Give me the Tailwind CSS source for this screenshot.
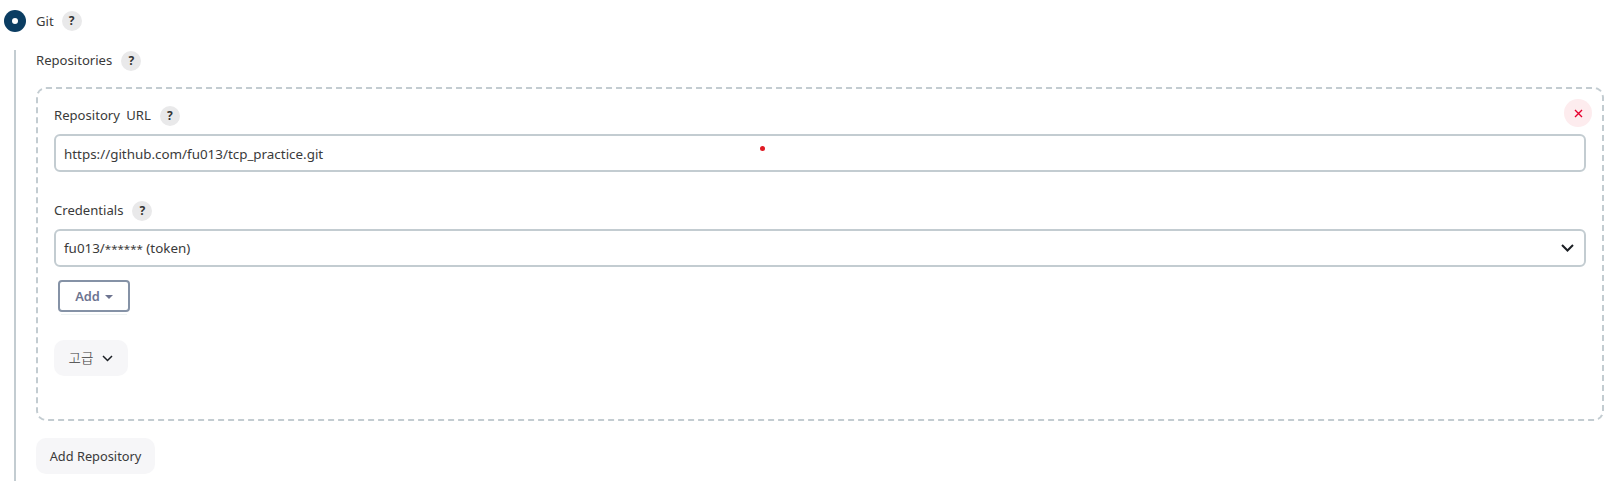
<!DOCTYPE html>
<html lang="en">
<head>
  <meta charset="UTF-8">
  <title>Git</title>
  <script src="https://cdn.jsdelivr.net/npm/@tailwindcss/browser@4"></script>
</head>
<body class="bg-white text-[#3a3a3a] text-[13.1px] font-['Noto_Sans','Noto_Sans_CJK_KR',sans-serif] overflow-hidden">
  <div class="relative h-[481px] w-[1615px] pt-[10px]">
    <!-- radio row -->
    <div class="flex items-center h-[22px] ml-[4px]">
      <span class="w-[22px] h-[22px] rounded-full bg-[#0b3d62] flex items-center justify-center">
        <span class="w-[6px] h-[6px] rounded-full bg-white"></span>
      </span>
      <span class="ml-[10px] pt-[1px]">Git</span>
      <span class="ml-[8px] w-[20px] h-[20px] rounded-full bg-[#e9e9ea] flex items-center justify-center text-[12px] font-bold text-[#333]">?</span>
    </div>

    <div class="ml-[14px] mt-[18px] border-l-2 border-[#c3ccd1] pl-[20px] h-[431px]">
      <div class="flex items-center h-[20px] pt-[1px]">
        <span>Repositories</span>
        <span class="ml-[9px] w-[20px] h-[20px] rounded-full bg-[#e9e9ea] flex items-center justify-center text-[12px] font-bold text-[#333]">?</span>
      </div>

      <!-- repeatable box -->
      <div class="relative mt-[17px] w-[1568px] h-[334px] border-2 border-dashed border-[#c3ccd1] rounded-[10px] pl-[16px] pr-[16px] pt-[17px]">
        <button class="absolute right-[10px] top-[10px] w-[28px] h-[28px] rounded-full bg-[#fdecee] flex items-center justify-center">
          <svg width="9" height="9" viewBox="0 0 9 9" fill="none" stroke="#e6002e" stroke-width="1.400"><path d="M1 1l7 7M8 1l-7 7"/></svg>
        </button>

        <div class="flex items-center h-[20px]">
          <span class="[word-spacing:3px]">Repository URL</span>
          <span class="ml-[9px] w-[20px] h-[20px] rounded-full bg-[#e9e9ea] flex items-center justify-center text-[12px] font-bold text-[#333]">?</span>
        </div>
        <div class="mt-[8px] w-[1532px] h-[38px] border-2 border-[#c3ccd1] rounded-[6px] flex items-center pl-[8px] pt-[2px] text-[13.4px]">https://github.com/fu013/tcp_practice.git</div>

        <div class="flex items-center h-[20px] mt-[29px]">
          <span>Credentials</span>
          <span class="ml-[9px] w-[20px] h-[20px] rounded-full bg-[#e9e9ea] flex items-center justify-center text-[12px] font-bold text-[#333]">?</span>
        </div>
        <div class="mt-[8px] w-[1532px] h-[38px] border-2 border-[#c3ccd1] rounded-[6px] flex items-center justify-between pl-[8px] pr-[10px] text-[13.4px]">
          <span>fu013/<span class="text-[11.5px]">******</span> (token)</span>
          <svg width="13" height="8" viewBox="0 0 13 8" fill="none" stroke="#1b1f24" stroke-width="2"><path d="M1 1l5.500 5.500L12 1"/></svg>
        </div>

        <button class="relative mt-[13px] ml-[4px] w-[72px] h-[32px] border-2 border-[#8592a6] rounded-[4px] flex items-center justify-center gap-[5px] pt-[1px] font-semibold text-[#6d7490] text-[12.8px]">
          Add
          <span class="w-0 h-0 border-x-[4px] border-x-transparent border-t-[4px] border-t-[#6d7490]"></span>
          <span class="absolute left-[1px] right-[1px] -bottom-[5px] h-[1px] bg-[#eef3f3]"></span>
        </button>

        <button class="mt-[28px] w-[74px] h-[36px] rounded-[10px] bg-[#f6f6f8] flex items-center justify-center gap-[9px] text-[13.5px] font-light">
          고급
          <svg width="11" height="7" viewBox="0 0 11 7" fill="none" stroke="#1b1f24" stroke-width="1.500"><path d="M1 1l4.500 4.500L10 1"/></svg>
        </button>
      </div>

      <button class="mt-[17px] w-[119px] h-[36px] rounded-[10px] bg-[#f6f6f8] flex items-center justify-center pt-[1px] text-[12.8px]">Add Repository</button>
    </div>

    <span class="absolute left-[760px] top-[146px] w-[5px] h-[5px] rounded-full bg-[#e01b24]"></span>
  </div>
</body>
</html>
